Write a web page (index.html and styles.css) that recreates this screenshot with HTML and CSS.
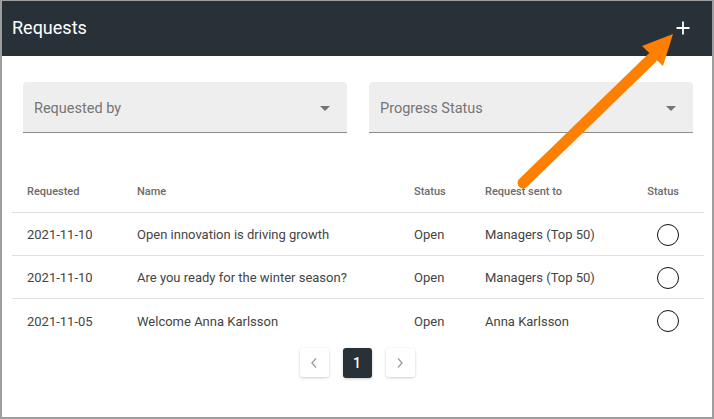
FILE: index.html
```html
<!DOCTYPE html>
<html>
<head>
<meta charset="utf-8">
<link rel="stylesheet" href="styles.css">
</head>
<body>
<div class="frame">
  <header class="toolbar">
    <span class="title">Requests</span>
    <button class="add" aria-label="Add">
      <svg width="14" height="14" viewBox="0 0 14 14"><path d="M7 0.5V13.5M0.5 7H13.5" stroke="#fff" stroke-width="1.8" fill="none"/></svg>
    </button>
  </header>
  <div class="content">
    <div class="filters">
      <div class="select"><span class="label">Requested by</span><span class="caret"></span></div>
      <div class="select"><span class="label">Progress Status</span><span class="caret"></span></div>
    </div>
    <div class="table">
      <div class="row head">
        <span>Requested</span><span>Name</span><span>Status</span><span>Request sent to</span><span class="end">Status</span>
      </div>
      <div class="row">
        <span>2021-11-10</span><span>Open innovation is driving growth</span><span>Open</span><span>Managers (Top 50)</span><span class="end"><i class="circle"></i></span>
      </div>
      <div class="row">
        <span>2021-11-10</span><span>Are you ready for the winter season?</span><span>Open</span><span>Managers (Top 50)</span><span class="end"><i class="circle"></i></span>
      </div>
      <div class="row last">
        <span>2021-11-05</span><span>Welcome Anna Karlsson</span><span>Open</span><span>Anna Karlsson</span><span class="end"><i class="circle"></i></span>
      </div>
    </div>
    <nav class="pager">
      <button class="pg"><svg width="8" height="12" viewBox="0 0 8 12"><path d="M6 1.5L2 6L6 10.5" stroke="#9e9e9e" stroke-width="1.4" fill="none"/></svg></button>
      <button class="pg active">1</button>
      <button class="pg"><svg width="8" height="12" viewBox="0 0 8 12"><path d="M2 1.5L6 6L2 10.5" stroke="#9e9e9e" stroke-width="1.4" fill="none"/></svg></button>
    </nav>
  </div>
  <svg class="arrow" width="714" height="419" viewBox="0 0 714 419">
    <line x1="523" y1="183" x2="652" y2="58" stroke="#ff8000" stroke-width="11" stroke-linecap="round"/>
    <polygon points="642,46 673,34 663,66" fill="#ff8000"/>
  </svg>
</div>
</body>
</html>
```
FILE: styles.css
```css
* { box-sizing: border-box; }
html, body { margin: 0; padding: 0; background: #fff; }
body { font-family: Roboto, "Noto Sans", sans-serif; }

.frame {
  position: relative;
  width: 714px;
  height: 419px;
  border: 2px solid #9e9e9e;
  border-top-width: 1px;
  overflow: hidden;
}

.toolbar {
  height: 55px;
  background: #283038;
  display: flex;
  align-items: center;
  justify-content: space-between;
  padding: 0 22px 2px 10px;
}
.title { color: #fff; font-size: 18px; font-weight: 400; }
.add {
  background: none; border: 0; padding: 0; width: 14px; height: 14px;
  display: flex;
}

.content { padding: 26px 0 0; }

.filters {
  display: flex;
  gap: 22px;
  padding: 0 19px 0 21px;
}
.select {
  flex: 1;
  height: 51px;
  background: #eeeeee;
  border-radius: 4px 4px 0 0;
  border-bottom: 1px solid #8c8c8c;
  display: flex;
  align-items: center;
  justify-content: space-between;
  padding: 2px 17px 0 11px;
}
.label { color: #757575; font-size: 14.5px; }
.caret {
  width: 0; height: 0;
  border-left: 5px solid transparent;
  border-right: 5px solid transparent;
  border-top: 5px solid #757575;
}

.table { margin: 37px 8px 0 10px; }
.row {
  display: grid;
  grid-template-columns: 110px 277px 71px 1fr 60px;
  align-items: center;
  height: 43px;
  padding: 1px 25px 0 15px;
  border-bottom: 1px solid #e0e0e0;
  font-size: 13px;
  color: #444;
}
.row.last { border-bottom: 0; }
.row.head { font-size: 11px; font-weight: 500; color: #6b6b6b; }
.end { justify-self: end; display: flex; }
.circle {
  display: block;
  width: 22px; height: 22px;
  border: 1.3px solid #111;
  border-radius: 50%;
}

.pager {
  display: flex;
  justify-content: center;
  gap: 14px;
  margin-top: 6px;
}
.pg {
  width: 29px; height: 29px;
  border: 0;
  border-radius: 3px;
  background: #fff;
  box-shadow: 0 1px 3px rgba(0,0,0,0.2);
  display: flex; align-items: center; justify-content: center;
  padding: 0;
  font-family: Roboto, sans-serif;
}
.pg.active {
  background: #283038;
  color: #fff;
  font-size: 14px;
  font-weight: 500;
  height: 30px;
}

.arrow { position: absolute; left: -2px; top: -1px; pointer-events: none; }
```
